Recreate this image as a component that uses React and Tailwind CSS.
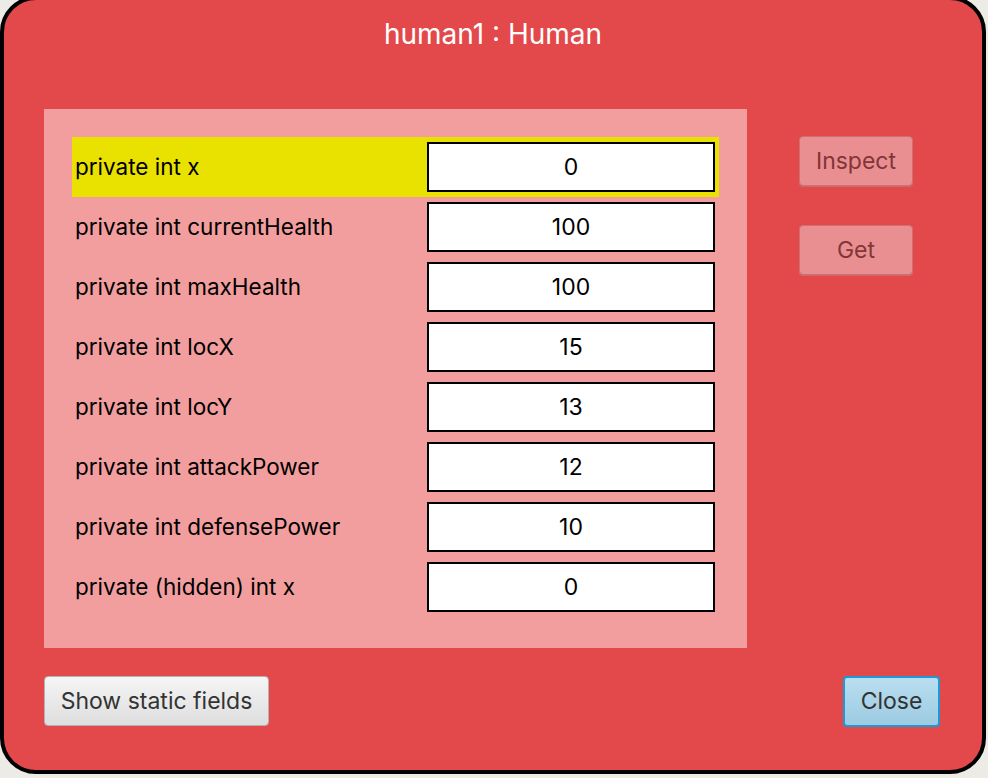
import React from 'react';

const fields = [
  ['private int x', '0'],
  ['private int currentHealth', '100'],
  ['private int maxHealth', '100'],
  ['private int locX', '15'],
  ['private int locY', '13'],
  ['private int attackPower', '12'],
  ['private int defensePower', '10'],
  ['private (hidden) int x', '0'],
];

export default function App() {
  return (
    <div className="h-[778px] w-[988px] overflow-hidden bg-[#ecebe6] font-['Inter',sans-serif]">
      <div className="-mt-[4px] flex h-[778px] w-[986px] flex-col rounded-[36px] border-4 border-black bg-[#e3484a]">
        <h1 className="pt-[17px] text-center text-[28px] leading-[34px] text-white">human1 : Human</h1>

        <div className="mt-[58px] flex pl-[40px]">
          <div className="h-[539px] w-[703px] bg-[#f39e9e] pl-[28px] pt-[28px]">
            {fields.map(([label, value], index) => (
              <div className={`flex h-[60px] w-[647px] items-center justify-between pl-[3px] pr-[4px] ${index === 0 ? 'bg-[#e9e200]' : ''}`} key={label + index}>
                <span className="text-[22.5px] text-black">{label}</span>
                <div className="flex h-[50px] w-[288px] items-center justify-center border-2 border-black bg-white text-[23px] text-black">{value}</div>
              </div>
            ))}
          </div>
          <div className="ml-[52px] flex flex-col pt-[27px]">
            <button className="h-[50px] w-[114px] rounded-[4px] border border-[#d06e70] bg-[#e98f91] text-[23px] text-[#833537] shadow-[0_1px_0_#c96a6c]">Inspect</button>
            <button className="mt-[39px] h-[50px] w-[114px] rounded-[4px] border border-[#d06e70] bg-[#e98f91] text-[23px] text-[#833537] shadow-[0_1px_0_#c96a6c]">Get</button>
          </div>
        </div>

        <div className="mt-[28px] flex items-start justify-between pl-[40px] pr-[42px]">
          <button className="h-[50px] w-[225px] rounded-[4px] border border-[#b3b3b3] bg-gradient-to-b from-[#f5f5f5] to-[#dedede] text-[23px] text-[#333333]">Show static fields</button>
          <button className="h-[51px] w-[97px] rounded-[4px] border-2 border-[#1a9ad6] bg-gradient-to-b from-[#b9def0] to-[#9ccbe2] text-[23px] text-[#333333]">Close</button>
        </div>
      </div>
    </div>
  );
}
